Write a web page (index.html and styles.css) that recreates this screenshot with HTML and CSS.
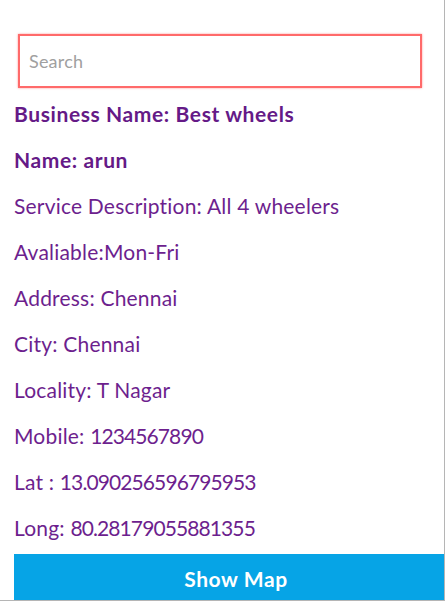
FILE: index.html
```html
<!DOCTYPE html>
<html>
<head>
<meta charset="utf-8">
<link rel="stylesheet" href="styles.css">
</head>
<body>
<div class="panel">
  <input class="search" type="text" placeholder="Search">
  <div class="details">
    <p class="strong">Business Name: Best wheels</p>
    <p class="strong">Name: arun</p>
    <p>Service Description: All 4 wheelers</p>
    <p>Avaliable:Mon-Fri</p>
    <p>Address: Chennai</p>
    <p>City: Chennai</p>
    <p>Locality: T Nagar</p>
    <p>Mobile: <span class="num">1234567890</span></p>
    <p>Lat : <span class="num">13.090256596795953</span></p>
    <p>Long: <span class="num">80.28179055881355</span></p>
  </div>
  <button class="map-btn">Show Map</button>
</div>
</body>
</html>
```
FILE: styles.css
```css
html, body {
  margin: 0;
  padding: 0;
  background: #ffffff;
}
.panel {
  box-sizing: border-box;
  width: 445px;
  height: 601px;
  padding: 34px 0 0 14px;
  border-right: 1px solid #b5b5b5;
  border-bottom: 1px solid #b5b5b5;
  overflow: hidden;
  font-family: "Lato", "Noto Sans", sans-serif;
}
.search {
  display: block;
  box-sizing: border-box;
  margin-left: 4px;
  width: 404px;
  height: 54px;
  border: 2px solid #ff6a6a;
  box-shadow: 0 0 2px rgba(255, 80, 80, 0.6);
  outline: none;
  padding: 0 9px;
  font-family: "Lato", "Noto Sans", sans-serif;
  font-size: 18px;
  letter-spacing: 0.2px;
  color: #333;
}
.search::placeholder {
  color: #a0a0a0;
}
.details {
  padding-top: 13px;
}
.details p {
  margin: 0 0 20px 0;
  font-size: 21px;
  line-height: 26px;
  letter-spacing: 0.2px;
  color: #6d1f8e;
  white-space: nowrap;
}
.details p.strong {
  font-weight: 700;
  letter-spacing: 0.6px;
  color: #651a87;
}
.details .num {
  letter-spacing: -0.9px;
}
.map-btn {
  display: block;
  width: 444px;
  height: 48px;
  margin-top: -7px;
  border: none;
  background: #06a4e6;
  color: #ffffff;
  font-family: "Lato", "Noto Sans", sans-serif;
  font-size: 21px;
  font-weight: 700;
  letter-spacing: 0.6px;
  padding: 0;
}
```
